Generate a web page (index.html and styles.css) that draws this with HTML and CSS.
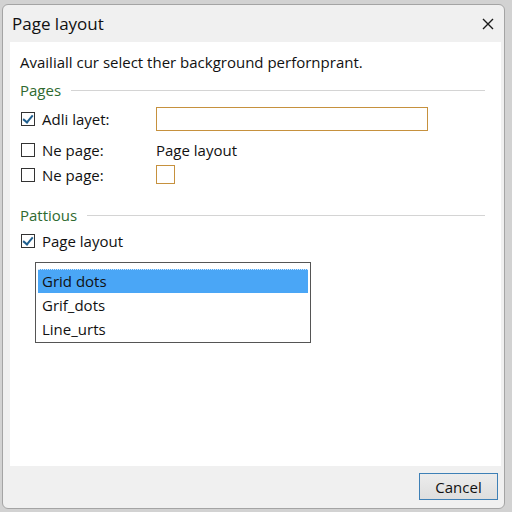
FILE: index.html
```html
<!DOCTYPE html>
<html lang="en">
<head>
  <meta charset="UTF-8" />
  <title>Page layout</title>
  <link rel="stylesheet" href="styles.css">
</head>
<body>
  <div class="dialog">
    <div class="titlebar">
      <span class="title">Page layout</span>
      <svg class="close" width="12" height="12" viewBox="0 0 12 12">
        <path d="M1 1 L11 11 M11 1 L1 11" stroke="#1a1a1a" stroke-width="1.4" fill="none" />
      </svg>
    </div>

    <div class="panel">
      <p class="intro">Availiall cur select ther background perfornprant.</p>

      <div class="group-head"><span>Pages</span><div class="rule"></div></div>
      <div class="row row-first">
        <label class="check"><span class="box checked"></span>Adli layet:</label>
        <input type="text" class="field" />
      </div>
      <div class="row">
        <label class="check"><span class="box"></span>Ne page:</label>
        <span class="value">Page layout</span>
      </div>
      <div class="row">
        <label class="check"><span class="box"></span>Ne page:</label>
        <span class="small-box"></span>
      </div>

      <div class="group-head group-two"><span>Pattious</span><div class="rule"></div></div>
      <div class="row row-option">
        <label class="check"><span class="box checked"></span>Page layout</label>
      </div>

      <div class="listbox">
        <div class="item selected">Grid dots</div>
        <div class="item">Grif_dots</div>
        <div class="item">Line_urts</div>
      </div>
    </div>

    <div class="footer">
      <button class="btn">Cancel</button>
    </div>
  </div>
</body>
</html>
```

FILE: styles.css
```css
body {
  margin: 0;
  background: #d2d2d2;
  font-family: "Open Sans", "Noto Sans", sans-serif;
  color: #111;
}
.dialog {
  box-sizing: border-box;
  width: 503px;
  height: 505px;
  margin: 4px 0 0 2px;
  background: #f0f0f0;
  border: 1px solid #a4a4a4;
  border-radius: 6px;
  display: flex;
  flex-direction: column;
}
.titlebar {
  height: 37px;
  display: flex;
  align-items: center;
  justify-content: space-between;
  padding: 0 10px 0 9px;
}
.title {
  font-size: 17px;
}
.panel {
  height: 424px;
  margin: 0 3px 0 7px;
  background: #fff;
  padding: 0 16px 0 10px;
  box-sizing: border-box;
}
.intro {
  margin: 0;
  padding-top: 9px;
  font-size: 15px;
  line-height: 22px;
}
.group-head {
  display: flex;
  align-items: center;
  margin-top: 6px;
  font-size: 15px;
  color: #2f6a2f;
  height: 22px;
}
.group-head .rule {
  flex: 1;
  height: 1px;
  background: #d4d4d4;
  margin-left: 10px;
}
.group-two {
  margin-top: 17px;
}
.row {
  display: flex;
  align-items: center;
  height: 25px;
  font-size: 15px;
}
.row-first {
  margin-top: 5px;
  margin-bottom: 6px;
}
.row-option {
  margin-top: 2px;
}
.check {
  display: flex;
  align-items: center;
  width: 136px;
}
.box {
  box-sizing: border-box;
  width: 14px;
  height: 14px;
  border: 1px solid #333;
  background: #fff;
  margin: 0 7px 0 1px;
  position: relative;
}
.box.checked::after {
  content: "";
  position: absolute;
  left: 3px;
  top: 0px;
  width: 4px;
  height: 8px;
  border: solid #1f5f8f;
  border-width: 0 2px 2px 0;
  transform: rotate(40deg);
}
.field {
  box-sizing: border-box;
  width: 272px;
  height: 24px;
  border: 1px solid #c6913e;
  padding: 0;
  margin: 0;
  outline: none;
}
.value {
  font-size: 15px;
}
.small-box {
  box-sizing: border-box;
  width: 19px;
  height: 19px;
  border: 1px solid #c6913e;
}
.listbox {
  box-sizing: border-box;
  width: 276px;
  height: 81px;
  margin: 9px 0 0 15px;
  border: 1px solid #555;
  padding: 6px 2px 0 2px;
  font-size: 15px;
}
.item {
  height: 24px;
  line-height: 24px;
  padding-left: 4px;
}
.item.selected {
  background: #4aa6f6;
  border-top: 1px dotted #cfe6fb;
  height: 23px;
  line-height: 23px;
}
.footer {
  flex: 1;
  display: flex;
  justify-content: flex-end;
  align-items: flex-start;
  padding: 7px 6px 0 0;
}
.btn {
  width: 79px;
  height: 27px;
  border: 1px solid #3e80b6;
  background: linear-gradient(#ececec, #dedede);
  font-family: "Open Sans", "Noto Sans", sans-serif;
  font-size: 15px;
  color: #111;
  padding: 0;
}
```
